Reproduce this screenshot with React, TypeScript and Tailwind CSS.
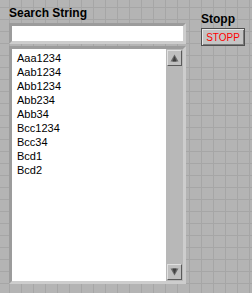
const items = ["Aaa1234", "Aab1234", "Abb1234", "Abb234", "Abb34", "Bcc1234", "Bcc34", "Bcd1", "Bcd2"]

const Arrow = ({ down }: { down?: boolean }) => (
  <svg width="9" height="8" viewBox="0 0 9 8" className={down ? "rotate-180" : ""}>
    <path d="M4.5 0.5 L8.5 7.5 L0.5 7.5 Z" fill="#6a6a6a" />
    <path d="M4.5 2 L6.5 7.5 L2.5 7.5 Z" fill="#404040" />
  </svg>
)

const ScrollButton = ({ down }: { down?: boolean }) => (
  <div className="flex h-[16px] w-[15px] items-center justify-center border border-t-[#e0e0e0] border-l-[#e0e0e0] border-r-[#5a5a5a] border-b-[#5a5a5a] bg-[#c0c0c0]">
    <Arrow down={down} />
  </div>
)

const App = () => {
  return (
    <div className="flex h-[293px] w-[252px] gap-[15px] bg-[#b4b4b4] bg-[linear-gradient(to_right,#a6a6a6_1px,transparent_1px),linear-gradient(to_bottom,#a6a6a6_1px,transparent_1px)] bg-size-[12px_12px] bg-position-[9px_7px] pl-[9px] pt-[6px] font-['Liberation_Sans',Arial,sans-serif] text-black">
      <div className="flex w-[177px] flex-col">
        <div className="h-[15px] text-[12px] font-bold leading-[15px]">Search String</div>
        <div className="mt-[2px] h-[21px] border-[3px] border-t-[#9c9c9c] border-l-[#9c9c9c] border-r-[#cdcdcd] border-b-[#cdcdcd] bg-white" />
        <div className="mt-[2px] flex h-[238px] border-[3px] border-t-[#9c9c9c] border-l-[#9c9c9c] border-r-[#cdcdcd] border-b-[#cdcdcd]">
          <div className="flex-1 bg-white pl-[5px] pt-[2px] text-[11px] leading-[14px]">
            {items.map((item) => (
              <div key={item}>{item}</div>
            ))}
          </div>
          <div className="flex w-[17px] flex-col justify-between bg-[#b8b8b8] py-[1px] pl-[1px]">
            <ScrollButton />
            <ScrollButton down />
          </div>
        </div>
      </div>
      <div className="flex flex-col pt-[6px]">
        <div className="h-[15px] text-[12px] font-bold leading-[15px]">Stopp</div>
        <div className="mt-[1px] flex h-[18px] w-[44px] items-center justify-center border border-[#505050] bg-[#c4c4c4] text-[10px] text-[#ff0000] shadow-[inset_1px_1px_0_#e6e6e6,inset_-1px_-1px_0_#7a7a7a]">
          STOPP
        </div>
      </div>
    </div>
  )
}

export default App
